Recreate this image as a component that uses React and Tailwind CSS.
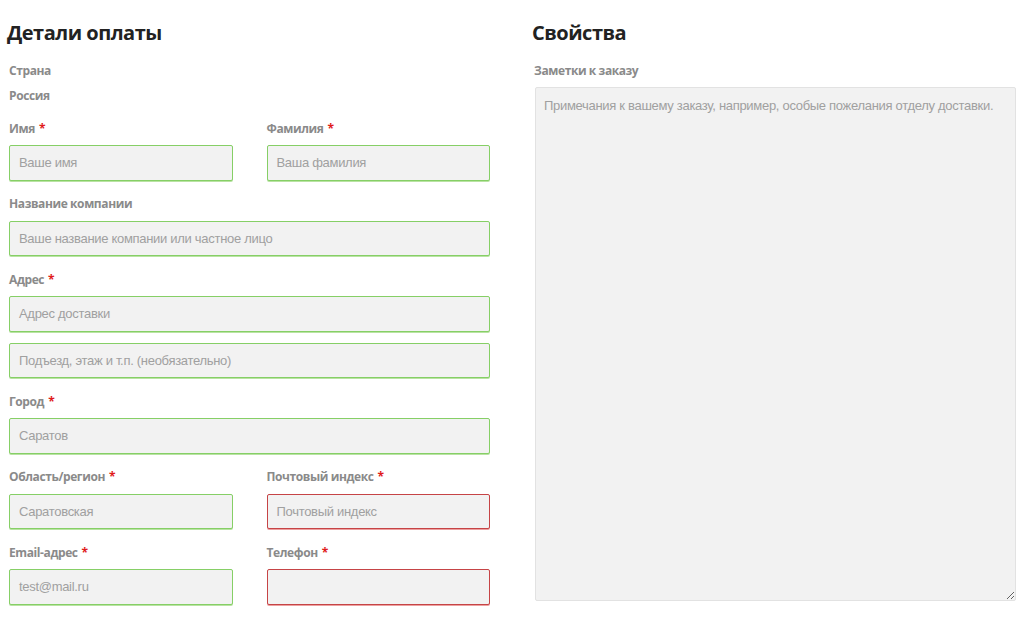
const font = { fontFamily: '"Open Sans", "Liberation Sans", sans-serif' };
const inputFont = { fontFamily: '"Liberation Sans", Arial, sans-serif' };

function Label({ text, required }) {
  return (
    <div className="text-[12px] font-bold text-[#8a8a8a] leading-[16px] h-[16px] tracking-[-0.4px]">
      {text}
      {required && <span className="text-[#e01b1b] ml-[4px]">*</span>}
    </div>
  );
}

function Input({ placeholder, value, invalid }) {
  return (
    <div
      className={
        'h-[35.5px] rounded-[2px] bg-[#f2f2f2] border flex items-center px-[9px] text-[13px] tracking-[-0.3px] text-[#a0a0a0] ' +
        (invalid
          ? 'border-[#c64446] shadow-[0_1px_0_#eca0a0]'
          : 'border-[#86cf66] shadow-[0_1px_0_#b9e3a3]')
      }
      style={inputFont}
    >
      {value || placeholder}
    </div>
  );
}

function Field({ label, required, placeholder, invalid }) {
  return (
    <div className="flex flex-col gap-[8.5px]">
      <Label text={label} required={required} />
      <Input placeholder={placeholder} invalid={invalid} />
    </div>
  );
}

export default function App() {
  return (
    <div className="w-[1024px] h-[621px] bg-white flex overflow-hidden" style={font}>
      {/* Billing */}
      <div className="w-[481px] ml-[9px] pt-[20px] flex flex-col">
        <h3 className="text-[20px] font-bold text-[#222] leading-[26px] -ml-[2px] tracking-[-0.5px]">Детали оплаты</h3>
        <div className="mt-[17px] flex flex-col gap-[9px]">
          <Label text="Страна" />
          <div className="text-[12px] font-bold text-[#8a8a8a] leading-[16px] tracking-[-0.4px]">Россия</div>
        </div>
        <div className="mt-[16.5px] grid grid-cols-2 gap-x-[34px] gap-y-[15.5px]">
          <Field label="Имя" required placeholder="Ваше имя" />
          <Field label="Фамилия" required placeholder="Ваша фамилия" />
          <div className="col-span-2">
            <Field label="Название компании" placeholder="Ваше название компании или частное лицо" />
          </div>
          <div className="col-span-2 flex flex-col gap-[11px]">
            <Field label="Адрес" required placeholder="Адрес доставки" />
            <Input placeholder="Подъезд, этаж и т.п. (необязательно)" />
          </div>
          <div className="col-span-2">
            <Field label="Город" required placeholder="Саратов" />
          </div>
          <Field label="Область/регион" required placeholder="Саратовская" />
          <Field label="Почтовый индекс" required placeholder="Почтовый индекс" invalid />
          <Field label="Email-адрес" required placeholder="test@mail.ru" />
          <Field label="Телефон" required placeholder="" invalid />
        </div>
      </div>

      {/* Additional */}
      <div className="ml-[44px] w-[482px] pt-[20px] flex flex-col">
        <h3 className="text-[20px] font-bold text-[#222] leading-[26px] -ml-[2px] tracking-[-0.5px]">Свойства</h3>
        <div className="mt-[17px]">
          <Label text="Заметки к заказу" />
        </div>
        <textarea
          className="mt-[8px] ml-[1px] w-[481px] h-[514px] bg-[#f2f2f2] border border-[#e2e2e2] rounded-[2px] px-[8px] py-[8px] text-[13px] tracking-[-0.3px] text-[#a0a0a0] placeholder:text-[#a0a0a0] outline-none resize"
          style={inputFont}
          placeholder="Примечания к вашему заказу, например, особые пожелания отделу доставки."
        />
      </div>
    </div>
  );
}
